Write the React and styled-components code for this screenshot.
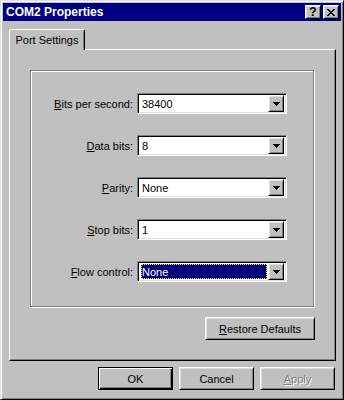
import React from 'react';
import styled, { createGlobalStyle, css } from 'styled-components';

const GlobalStyle = createGlobalStyle`
  html, body {
    margin: 0;
    padding: 0;
    background: #c0c0c0;
  }
  body {
    font-family: "Liberation Sans", Arial, sans-serif;
    font-size: 11px;
    color: #000;
  }
  * { box-sizing: border-box; }
`;

const raised = css`
  border: 1px solid;
  border-color: #fff #000 #000 #fff;
  box-shadow: inset 1px 1px #dfdfdf, inset -1px -1px #808080;
`;

const Window = styled.div`
  width: 344px;
  height: 400px;
  background: #c0c0c0;
  border: 1px solid;
  border-color: #dfdfdf #000 #000 #dfdfdf;
  box-shadow: inset 1px 1px #fff, inset -1px -1px #808080;
  padding: 2px;
  display: flex;
  flex-direction: column;
`;

const TitleBar = styled.div`
  height: 18px;
  background: #000080;
  color: #fff;
  display: flex;
  align-items: center;
  padding: 0 2px 0 3px;
  font-weight: bold;
  font-size: 12px;
`;

const TitleText = styled.span`
  flex: 1;
`;

const TitleButton = styled.button`
  ${raised};
  width: 16px;
  height: 14px;
  padding: 0;
  margin-left: ${(p) => (p.$gap ? '2px' : '0')};
  background: #c0c0c0;
  display: flex;
  align-items: center;
  justify-content: center;
  font-family: "Liberation Sans", Arial, sans-serif;
  font-weight: bold;
  font-size: 12px;
  line-height: 1;
  color: #000;
`;

const Body = styled.div`
  flex: 1;
  display: flex;
  flex-direction: column;
  padding: 8px 5px 0 6px;
`;

const TabStrip = styled.div`
  display: flex;
  height: 20px;
  position: relative;
  z-index: 1;
`;

const Tab = styled.div`
  width: 76px;
  height: 21px;
  background: #c0c0c0;
  border-top: 1px solid #fff;
  border-left: 1px solid #fff;
  border-right: 1px solid #000;
  border-top-left-radius: 2px;
  border-top-right-radius: 2px;
  box-shadow: inset -1px 0 #808080;
  display: flex;
  align-items: center;
  justify-content: center;
  padding-bottom: 1px;
`;

const Panel = styled.div`
  height: 312px;
  border: 1px solid;
  border-color: #fff #000 #000 #fff;
  box-shadow: inset -1px -1px #808080;
  padding: 20px 20px 0 20px;
  display: flex;
  flex-direction: column;
`;

const GroupBox = styled.div`
  height: 237px;
  width: 284px;
  border: 1px solid #808080;
  box-shadow: inset 1px 1px #fff, 1px 1px #fff;
  display: grid;
  grid-template-columns: 102px 150px;
  grid-auto-rows: 21px;
  column-gap: 4px;
  row-gap: 21px;
  align-content: start;
  padding-top: 22px;
`;

const Label = styled.label`
  display: flex;
  align-items: center;
  justify-content: flex-end;
  white-space: nowrap;
`;

const Combo = styled.div`
  height: 21px;
  background: #fff;
  border: 1px solid;
  border-color: #808080 #fff #fff #808080;
  box-shadow: inset 1px 1px #000, inset -1px -1px #dfdfdf;
  display: flex;
  align-items: center;
  padding: 2px;
`;

const ComboValue = styled.span`
  flex: 1;
  height: 15px;
  margin: 0 1px;
  padding-left: 1px;
  display: flex;
  align-items: center;
  ${(p) =>
    p.$focused &&
    css`
      background: #000080;
      color: #fff;
      outline: 1px dotted #ffff00;
      outline-offset: -1px;
    `}
`;

const DropButton = styled.span`
  ${raised};
  width: 16px;
  height: 17px;
  background: #c0c0c0;
  display: flex;
  align-items: center;
  justify-content: center;
`;

const Arrow = () => (
  <svg width="7" height="4" viewBox="0 0 7 4">
    <path d="M0 0h7v1H0zM1 1h5v1H1zM2 2h3v1H2zM3 3h1v1H3z" fill="#000" />
  </svg>
);

const CloseGlyph = () => (
  <svg width="8" height="7" viewBox="0 0 8 7">
    <path
      d="M0 0h2v1h1v1h2V1h1V0h2v1H7v1H6v1H5v1h1v1h1v1h1v1H6V6H5V5H3v1H2v1H0V6h1V5h1V4h1V3H2V2H1V1H0z"
      fill="#000"
    />
  </svg>
);

const RestoreRow = styled.div`
  display: flex;
  justify-content: flex-end;
  margin-top: 10px;
`;

const Button = styled.button`
  ${raised};
  width: ${(p) => p.$width || 75}px;
  height: 23px;
  padding: 0;
  background: #c0c0c0;
  font-family: "Liberation Sans", Arial, sans-serif;
  font-size: 11px;
  color: #000;
  ${(p) =>
    p.$default &&
    css`
      border: 1px solid #000;
      box-shadow: inset 1px 1px #fff, inset -1px -1px #000, inset -2px -2px #808080;
    `}
  ${(p) =>
    p.disabled &&
    css`
      color: #808080;
      text-shadow: 1px 1px #fff;
    `}
`;

const Footer = styled.div`
  display: flex;
  justify-content: flex-end;
  gap: 6px;
  padding: 6px 1px 0 0;
`;

const fields = [
  { key: 'bps', mn: 'B', rest: 'its per second:', value: '38400' },
  { key: 'data', mn: 'D', rest: 'ata bits:', value: '8' },
  { key: 'parity', mn: 'P', rest: 'arity:', value: 'None' },
  { key: 'stop', mn: 'S', rest: 'top bits:', value: '1' },
  { key: 'flow', mn: 'F', rest: 'low control:', value: 'None', focused: true },
];

const App = () => {
  return (
    <>
      <GlobalStyle />
      <Window>
        <TitleBar>
          <TitleText>COM2 Properties</TitleText>
          <TitleButton>?</TitleButton>
          <TitleButton $gap>
            <CloseGlyph />
          </TitleButton>
        </TitleBar>
        <Body>
          <TabStrip>
            <Tab>Port Settings</Tab>
          </TabStrip>
          <Panel>
            <GroupBox>
              {fields.map((f) => (
                <React.Fragment key={f.key}>
                  <Label>
                    <u>{f.mn}</u>
                    {f.rest}
                  </Label>
                  <Combo>
                    <ComboValue $focused={f.focused}>{f.value}</ComboValue>
                    <DropButton>
                      <Arrow />
                    </DropButton>
                  </Combo>
                </React.Fragment>
              ))}
            </GroupBox>
            <RestoreRow>
              <Button $width={110}>
                <u>R</u>estore Defaults
              </Button>
            </RestoreRow>
          </Panel>
          <Footer>
            <Button $default>OK</Button>
            <Button>Cancel</Button>
            <Button disabled>
              <u>A</u>pply
            </Button>
          </Footer>
        </Body>
      </Window>
    </>
  );
};

export default App;
